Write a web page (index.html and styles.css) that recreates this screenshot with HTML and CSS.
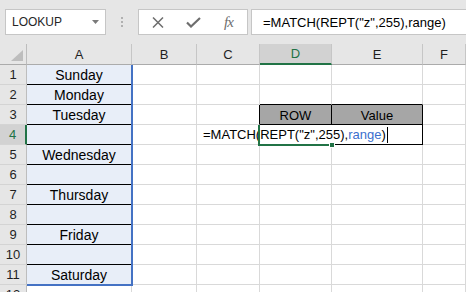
FILE: index.html
```html
<!DOCTYPE html>
<html>
<head>
<meta charset="utf-8">
<link rel="stylesheet" href="styles.css">
</head>
<body>
<div class="toolbar">
  <div class="namebox"><span>LOOKUP</span><svg class="dd" width="7" height="4" viewBox="0 0 7 4"><path d="M0 0H7L3.5 4Z" fill="#7a7a7a"/></svg></div>
  <div class="dots"><i></i><i></i><i></i></div>
  <div class="fxbox">
    <svg class="ic-x" width="12" height="11" viewBox="0 0 12 11"><path d="M1 0.5L11 10.5M11 0.5L1 10.5" stroke="#6e6e6e" stroke-width="1.5" fill="none"/></svg>
    <svg class="ic-ok" width="15" height="11" viewBox="0 0 15 11"><path d="M1 5.5L5 9.5L14 1" stroke="#6e6e6e" stroke-width="2.2" fill="none"/></svg>
    <span class="fx">fx</span>
  </div>
  <div class="formula">=MATCH(REPT("z",255),range)</div>
</div>
<div class="sheet">
  <div class="corner"><svg width="12" height="11" viewBox="0 0 12 11"><path d="M12 0V11H0Z" fill="#bdbdbd"/></svg></div>
  <div class="ch">A</div><div class="ch">B</div><div class="ch">C</div><div class="ch sel">D</div><div class="ch">E</div><div class="ch">F</div>

  <div class="rh">1</div><div class="c a">Sunday</div><div class="c"></div><div class="c"></div><div class="c"></div><div class="c"></div><div class="c"></div>
  <div class="rh">2</div><div class="c a">Monday</div><div class="c"></div><div class="c"></div><div class="c bb"></div><div class="c bb"></div><div class="c"></div>
  <div class="rh">3</div><div class="c a">Tuesday</div><div class="c"></div><div class="c br"></div><div class="c gray br bb">ROW</div><div class="c gray br bb">Value</div><div class="c"></div>
  <div class="rh sel">4</div><div class="c a"></div><div class="c"></div><div class="c"></div><div class="c bb"></div><div class="c bb br"></div><div class="c"></div>
  <div class="rh">5</div><div class="c a">Wednesday</div><div class="c"></div><div class="c"></div><div class="c"></div><div class="c"></div><div class="c"></div>
  <div class="rh">6</div><div class="c a"></div><div class="c"></div><div class="c"></div><div class="c"></div><div class="c"></div><div class="c"></div>
  <div class="rh">7</div><div class="c a">Thursday</div><div class="c"></div><div class="c"></div><div class="c"></div><div class="c"></div><div class="c"></div>
  <div class="rh">8</div><div class="c a"></div><div class="c"></div><div class="c"></div><div class="c"></div><div class="c"></div><div class="c"></div>
  <div class="rh">9</div><div class="c a">Friday</div><div class="c"></div><div class="c"></div><div class="c"></div><div class="c"></div><div class="c"></div>
  <div class="rh">10</div><div class="c a"></div><div class="c"></div><div class="c"></div><div class="c"></div><div class="c"></div><div class="c"></div>
  <div class="rh">11</div><div class="c a last">Saturday</div><div class="c"></div><div class="c"></div><div class="c"></div><div class="c"></div><div class="c"></div>
  <div class="rh">12</div><div class="c"></div><div class="c"></div><div class="c"></div><div class="c"></div><div class="c"></div><div class="c"></div>

  <div class="range"></div>
  <div class="editor">=MATCH(REPT("z",255),<span class="ref">range</span>)<span class="caret"></span></div>
  <div class="selection"></div>
  <div class="handle"></div>
</div>
</body>
</html>
```
FILE: styles.css
```css
* { box-sizing: border-box; }
html, body { margin: 0; padding: 0; }
body {
  width: 466px;
  height: 292px;
  overflow: hidden;
  background: #fff;
  font-family: "Liberation Sans", Arial, sans-serif;
  color: #000;
}
.toolbar {
  height: 44px;
  background: #e6e6e6;
  display: flex;
  align-items: flex-start;
  padding: 9px 0 0 5px;
}
.namebox {
  width: 101px;
  height: 26px;
  background: #fff;
  border: 1px solid #c6c6c6;
  display: flex;
  align-items: center;
  justify-content: space-between;
  padding: 0 6px 0 6px;
  font-size: 12px;
  color: #262626;
}
.dots {
  width: 32px;
  height: 26px;
  display: flex;
  flex-direction: column;
  align-items: center;
  justify-content: center;
  gap: 2px;
}
.dots i {
  display: block;
  width: 2px;
  height: 2px;
  background: #b0b0b0;
}
.fxbox {
  width: 110px;
  height: 26px;
  background: #fff;
  border: 1px solid #c6c6c6;
  display: flex;
  align-items: center;
  padding-left: 13px;
}
.ic-ok { margin-left: 22px; }
.fx {
  margin-left: 23px;
  font-family: "Liberation Serif", serif;
  font-style: italic;
  font-size: 15px;
  color: #6e6e6e;
  letter-spacing: -1px;
}
.formula {
  flex: 1;
  margin-left: 3px;
  height: 26px;
  background: #fff;
  border: 1px solid #c6c6c6;
  border-right: none;
  display: flex;
  align-items: center;
  padding-left: 11px;
  font-size: 13px;
}
.sheet {
  position: relative;
  display: grid;
  grid-template-columns: 27px 105px 65px 63px 72px 91px 43px;
  grid-template-rows: 21px;
  grid-auto-rows: 20px;
  font-size: 13px;
}
.corner {
  background: #e6e6e6;
  border-right: 1px solid #bdbdbd;
  border-bottom: 1px solid #ababab;
  display: flex;
  align-items: flex-end;
  justify-content: flex-end;
  padding: 0 3px 3px 0;
}
.ch {
  background: #e6e6e6;
  border-right: 1px solid #c6c6c6;
  border-bottom: 1px solid #ababab;
  display: flex;
  align-items: center;
  justify-content: center;
  color: #1f1f1f;
}
.ch.sel {
  background: #d2d2d2;
  color: #217346;
  border-bottom: 2px solid #217346;
}
.rh {
  background: #e6e6e6;
  border-right: 1px solid #bdbdbd;
  border-bottom: 1px solid #d4d4d4;
  display: flex;
  align-items: center;
  justify-content: center;
  color: #1f1f1f;
}
.rh.sel {
  background: #d2d2d2;
  color: #217346;
  border-right: 2px solid #217346;
}
.c {
  border-right: 1px solid #d9d9d9;
  border-bottom: 1px solid #d9d9d9;
  display: flex;
  align-items: center;
  justify-content: center;
  padding-top: 1px;
}
.c.a {
  background: #e8eef8;
  border-bottom-color: #000;
  font-size: 14px;
}
.c.a.last { border-bottom-color: #d9d9d9; }
.c.bb { border-bottom-color: #000; }
.c.br { border-right-color: #000; }
.c.gray { background: #a6a6a6; }
.range {
  position: absolute;
  left: 27px;
  top: 21px;
  width: 106px;
  height: 221px;
  border-right: 2px solid #4472c4;
  border-bottom: 2px solid #4472c4;
}
.editor {
  position: absolute;
  left: 197px;
  top: 81px;
  height: 19px;
  width: 192px;
  background: #fff;
  padding-left: 6px;
  display: flex;
  align-items: center;
  white-space: nowrap;
  font-size: 13px;
}
.ref { color: #3b6fce; }
.caret {
  display: inline-block;
  width: 1px;
  height: 16px;
  background: #000;
  margin-left: 1px;
}
.selection {
  position: absolute;
  left: 258px;
  top: 81px;
  width: 75px;
  height: 21px;
  border-left: 2px solid #217346;
  border-bottom: 2px solid #217346;
}
.handle {
  position: absolute;
  left: 329px;
  top: 98px;
  width: 6px;
  height: 6px;
  background: #217346;
  border: 1px solid #fff;
}
```
